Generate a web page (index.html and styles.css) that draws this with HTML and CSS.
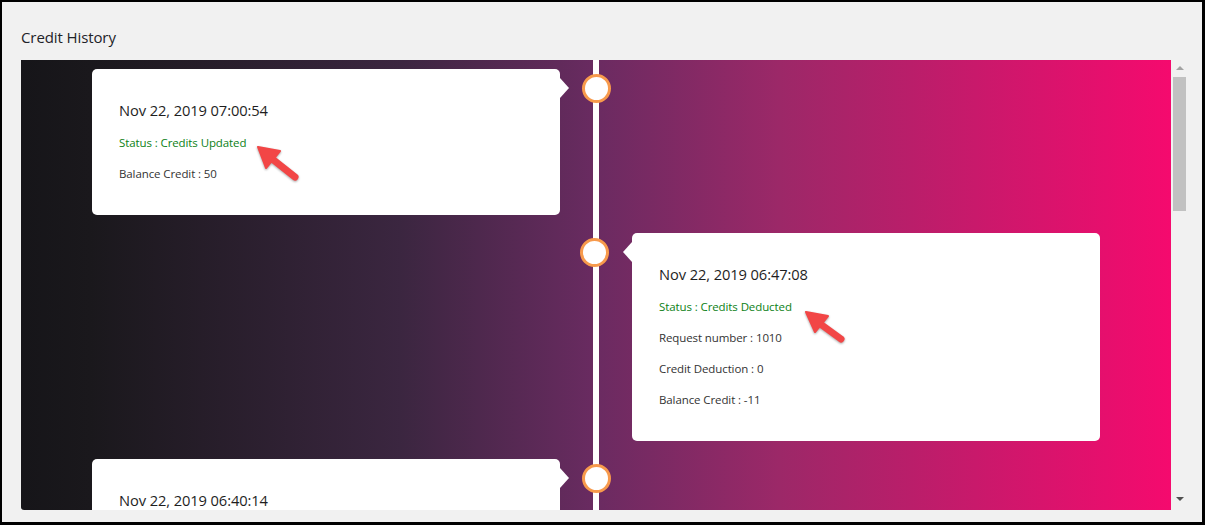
FILE: index.html
```html
<!DOCTYPE html>
<html>
<head>
<meta charset="utf-8">
<link rel="stylesheet" href="styles.css">
</head>
<body>
<div class="frame">
  <h2 class="title">Credit History</h2>
  <div class="scroller">
    <div class="viewport">
      <div class="timeline">
        <div class="item left">
          <div class="card">
            <div class="date">Nov 22, 2019 07:00:54</div>
            <div class="line status">Status : Credits Updated</div>
            <div class="line">Balance Credit : 50</div>
          </div>
          <span class="dot"></span>
        </div>
        <div class="item right">
          <div class="card">
            <div class="date">Nov 22, 2019 06:47:08</div>
            <div class="line status">Status : Credits Deducted</div>
            <div class="line">Request number : 1010</div>
            <div class="line">Credit Deduction : 0</div>
            <div class="line">Balance Credit : -11</div>
          </div>
          <span class="dot"></span>
        </div>
        <div class="item left">
          <div class="card">
            <div class="date">Nov 22, 2019 06:40:14</div>
          </div>
          <span class="dot"></span>
        </div>
      </div>
    </div>
    <div class="scrollbar">
      <span class="sb-up"></span>
      <div class="sb-track"><div class="sb-thumb"></div></div>
      <span class="sb-down"></span>
    </div>
  </div>
  <svg class="annot" width="1205" height="525" viewBox="0 0 1205 525">
    <g fill="#f24646" stroke="#f24646" stroke-linecap="round" stroke-linejoin="round">
      <line x1="271" y1="158" x2="295" y2="177" stroke-width="7"/>
      <polygon points="258,147 280,151 266,168" stroke-width="2"/>
      <line x1="819" y1="323" x2="841" y2="339" stroke-width="7"/>
      <polygon points="806,312 828,316 815,332" stroke-width="2"/>
    </g>
  </svg>
</div>
</body>
</html>
```

FILE: styles.css
```css
* { box-sizing: border-box; }
html, body { margin: 0; padding: 0; }
body {
  width: 1205px;
  height: 525px;
  overflow: hidden;
  font-family: "Open Sans", "Noto Sans", sans-serif;
}
.frame {
  position: relative;
  width: 1205px;
  height: 525px;
  background: #f1f1f1;
  border: 2px solid #000;
  border-right-width: 3px;
  border-bottom-width: 3px;
  padding: 25px 14px 0 19px;
}
.title {
  margin: 0 0 13px;
  font-size: 15px;
  line-height: 20px;
  font-weight: 400;
  color: #1e2328;
  letter-spacing: -0.1px;
}
.scroller {
  display: flex;
  height: 450px;
}
.viewport {
  width: 1150px;
  height: 450px;
  overflow: hidden;
  border-radius: 0 0 0 3px;
  background: linear-gradient(90deg, #161519 0%, #1a181c 6%, #3b2640 33%, #6a2b61 50%, #9c2868 66%, #f50a6e 100%);
}
.timeline {
  position: relative;
  padding-top: 9px;
  display: flex;
  flex-direction: column;
  gap: 18px;
}
.timeline::before {
  content: "";
  position: absolute;
  left: 572px;
  top: 0;
  bottom: -300px;
  width: 6px;
  background: #fff;
}
.item {
  position: relative;
  width: 50%;
  display: flex;
}
.item.left { padding-right: 36px; justify-content: flex-end; }
.item.right { margin-left: 50%; padding-left: 36px; }
.card {
  position: relative;
  width: 468px;
  background: #fff;
  border-radius: 5px;
  padding: 32px 27px 33px;
}
.card::after {
  content: "";
  position: absolute;
  top: 9px;
  border-top: 10px solid transparent;
  border-bottom: 10px solid transparent;
}
.left .card::after { right: -9px; border-left: 9px solid #fff; }
.right .card::after { left: -9px; border-right: 9px solid #fff; }
.dot {
  position: absolute;
  top: 5px;
  width: 29px;
  height: 29px;
  border-radius: 50%;
  background: #fff;
  border: 3.5px solid #f79a4c;
  z-index: 2;
}
.left .dot { right: -15px; }
.right .dot { left: -16px; }
.date {
  font-size: 14.7px;
  line-height: 18px;
  color: #1e1e1e;
  letter-spacing: -0.1px;
}
.line {
  margin-top: 15px;
  font-size: 11.5px;
  line-height: 16px;
  color: #333;
  letter-spacing: -0.1px;
}
.line.status { margin-top: 16px; color: #0c7f16; }
.scrollbar {
  width: 17px;
  height: 450px;
  background: #f1f1f1;
  display: flex;
  flex-direction: column;
  align-items: center;
}
.sb-up, .sb-down {
  display: block;
  width: 0;
  height: 0;
  border-left: 4px solid transparent;
  border-right: 4px solid transparent;
}
.sb-up { margin-top: 6px; border-bottom: 4px solid #a3a3a3; }
.sb-down { margin-bottom: 9px; border-top: 4px solid #505050; }
.sb-track { flex: 1; width: 100%; padding: 7px 2px 0; }
.sb-thumb { height: 134px; background: #c1c1c1; }
.annot {
  position: absolute;
  left: -2px;
  top: -2px;
  pointer-events: none;
  filter: drop-shadow(0 1px 1px rgba(0,0,0,0.35));
}
```
